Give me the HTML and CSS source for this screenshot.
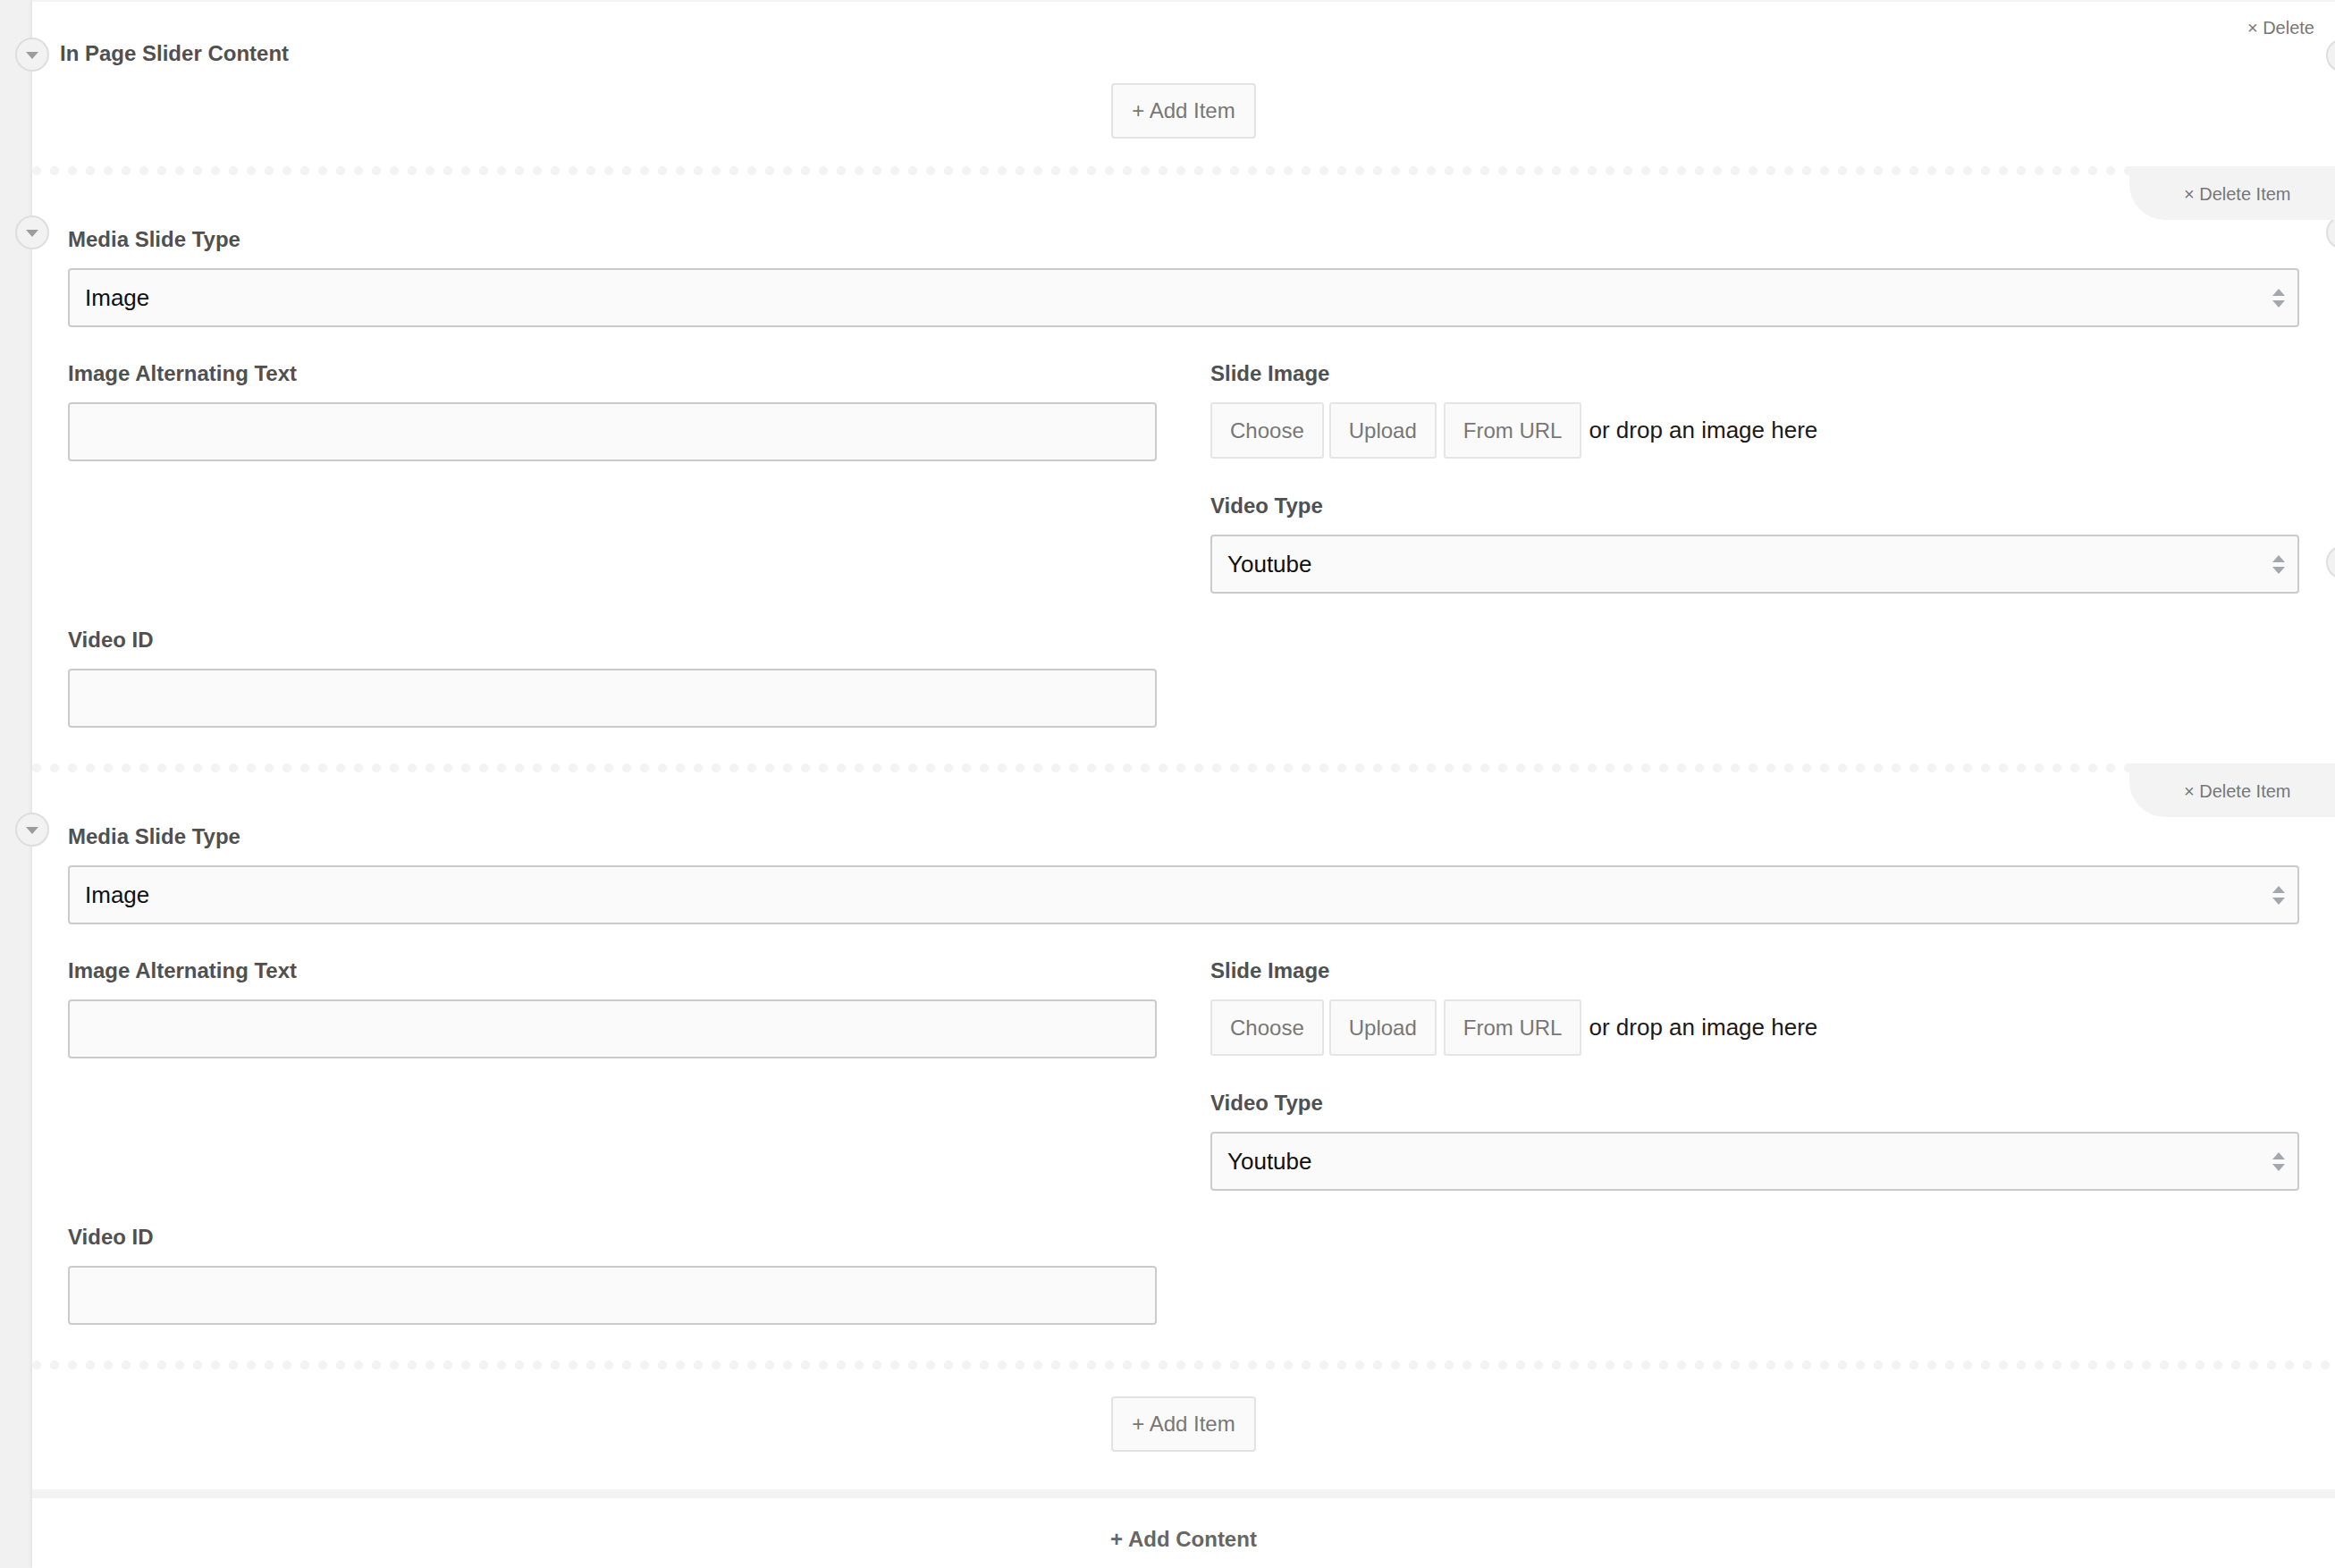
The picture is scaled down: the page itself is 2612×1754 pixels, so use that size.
FILE: index.html
```html
<!DOCTYPE html>
<html lang="en">
<head>
    <meta charset="UTF-8">
    <meta name="viewport" content="width=device-width, initial-scale=1.0">
    <title>In Page Slider Content</title>
    <link rel="stylesheet" href="styles.css">
</head>
<body>
    <div class="panel">
        <div class="content-block">
            <span class="toggle"></span>
            <span class="edge-toggle"></span>
            <a class="delete-block" href="#">&times; Delete</a>
            <h3 class="block-title">In Page Slider Content</h3>
            <div class="add-row">
                <button class="add-item" type="button">+ Add Item</button>
            </div>
        </div>

        <div class="item dotted">
            <span class="toggle"></span>
            <span class="edge-toggle"></span>
            <span class="edge-toggle lower"></span>
            <a class="delete-item" href="#">&times; Delete Item</a>
            <div class="fields">
                <div class="field wide">
                    <label>Media Slide Type</label>
                    <div class="select">
                        <span>Image</span>
                        <svg class="arrows" width="14" height="21" viewBox="0 0 14 21"><path d="M0 8 L7 0 L14 8 Z M0 13 L14 13 L7 21 Z"/></svg>
                    </div>
                </div>
                <div class="field">
                    <label>Image Alternating Text</label>
                    <input class="text-input" type="text">
                </div>
                <div class="stack">
                    <div class="field">
                        <label>Slide Image</label>
                        <div class="upload-row">
                            <button class="upload-btn" type="button">Choose</button>
                            <button class="upload-btn" type="button">Upload</button>
                            <button class="upload-btn" type="button">From URL</button>
                            <span class="drop-text">or drop an image here</span>
                        </div>
                    </div>
                    <div class="field">
                        <label>Video Type</label>
                        <div class="select">
                            <span>Youtube</span>
                            <svg class="arrows" width="14" height="21" viewBox="0 0 14 21"><path d="M0 8 L7 0 L14 8 Z M0 13 L14 13 L7 21 Z"/></svg>
                        </div>
                    </div>
                </div>
                <div class="field">
                    <label>Video ID</label>
                    <input class="text-input" type="text">
                </div>
            </div>
        </div>

        <div class="item dotted">
            <span class="toggle"></span>
            <a class="delete-item" href="#">&times; Delete Item</a>
            <div class="fields">
                <div class="field wide">
                    <label>Media Slide Type</label>
                    <div class="select">
                        <span>Image</span>
                        <svg class="arrows" width="14" height="21" viewBox="0 0 14 21"><path d="M0 8 L7 0 L14 8 Z M0 13 L14 13 L7 21 Z"/></svg>
                    </div>
                </div>
                <div class="field">
                    <label>Image Alternating Text</label>
                    <input class="text-input" type="text">
                </div>
                <div class="stack">
                    <div class="field">
                        <label>Slide Image</label>
                        <div class="upload-row">
                            <button class="upload-btn" type="button">Choose</button>
                            <button class="upload-btn" type="button">Upload</button>
                            <button class="upload-btn" type="button">From URL</button>
                            <span class="drop-text">or drop an image here</span>
                        </div>
                    </div>
                    <div class="field">
                        <label>Video Type</label>
                        <div class="select">
                            <span>Youtube</span>
                            <svg class="arrows" width="14" height="21" viewBox="0 0 14 21"><path d="M0 8 L7 0 L14 8 Z M0 13 L14 13 L7 21 Z"/></svg>
                        </div>
                    </div>
                </div>
                <div class="field">
                    <label>Video ID</label>
                    <input class="text-input" type="text">
                </div>
            </div>
        </div>

        <div class="add-row bottom dotted">
            <button class="add-item" type="button">+ Add Item</button>
        </div>

        <div class="band"></div>

        <div class="add-content">+ Add Content</div>
    </div>
</body>
</html>
```

FILE: styles.css
```css
html, body {
    overflow: hidden;
}

body {
    margin: 0;
    padding: 0;
    background-color: #f1f1f1;
    font-family: "Liberation Sans", Arial, sans-serif;
    color: #505050;
    height: 1754px;
}

.panel {
    margin-left: 36px;
    background-color: #fff;
    border-top: 2px solid #f4f4f4;
    box-shadow: -2px 0 3px rgba(0, 0, 0, 0.05);
    height: 1752px;
}

/* round collapse buttons on the left edge */
.toggle {
    position: absolute;
    left: -19px;
    width: 38px;
    height: 38px;
    box-sizing: border-box;
    border: 2px solid #dedede;
    border-radius: 50%;
    background-color: #f2f2f2;
    display: flex;
    align-items: center;
    justify-content: center;
}

.toggle::after {
    content: "";
    border-left: 7px solid transparent;
    border-right: 7px solid transparent;
    border-top: 8px solid #9c9c9c;
    margin-top: 1px;
}

.edge-toggle {
    position: absolute;
    right: -28px;
    width: 38px;
    height: 38px;
    box-sizing: border-box;
    border: 2px solid #dedede;
    border-radius: 50%;
    background-color: #f2f2f2;
}

.content-block {
    position: relative;
    padding: 43px 0 31px;
}

.content-block .toggle {
    top: 40px;
}

.content-block .edge-toggle {
    top: 41px;
}

.block-title {
    margin: 0 0 18px 31px;
    font-size: 24px;
    line-height: 30px;
    font-weight: bold;
    color: #505050;
}

.delete-block {
    position: absolute;
    top: 17px;
    right: 23px;
    font-size: 20px;
    line-height: 24px;
    color: #777;
    text-decoration: none;
}

.add-row {
    display: flex;
    justify-content: center;
}

.add-item {
    height: 62px;
    padding: 0 21px;
    border: 2px solid #e3e3e3;
    border-radius: 4px;
    background-color: #fafafa;
    font-family: "Liberation Sans", Arial, sans-serif;
    font-size: 24px;
    color: #777;
    cursor: pointer;
}

/* dotted separator along the top of a row */
.dotted {
    background-image: radial-gradient(circle, #f3f3f3 4.5px, transparent 5.5px);
    background-size: 20px 10px;
    background-position: -5px 0;
    background-repeat: repeat-x;
}

.item {
    position: relative;
    padding: 67px 40px 40px;
}

.item .toggle {
    top: 55px;
}

.item .edge-toggle {
    top: 55px;
}

.item .edge-toggle.lower {
    top: 424px;
}

.delete-item {
    position: absolute;
    top: 0;
    right: 0;
    width: 230px;
    height: 60px;
    box-sizing: border-box;
    padding-left: 61px;
    line-height: 62px;
    font-size: 20px;
    color: #777;
    text-decoration: none;
    background-color: #f3f3f3;
    border-bottom-left-radius: 40px;
}

.fields {
    display: grid;
    grid-template-columns: 1fr 1fr;
    column-gap: 60px;
    row-gap: 37px;
    align-items: start;
}

.field.wide {
    grid-column: 1 / 3;
}

.stack {
    display: flex;
    flex-direction: column;
    gap: 38px;
}

.field label {
    display: block;
    margin-bottom: 17px;
    font-size: 24px;
    line-height: 30px;
    font-weight: bold;
    color: #505050;
}

.select {
    display: flex;
    align-items: center;
    justify-content: space-between;
    height: 66px;
    box-sizing: border-box;
    padding: 0 14px 0 17px;
    border: 2px solid #cbcbcb;
    border-radius: 4px;
    background-color: #fafafa;
    font-size: 26px;
    color: #111;
}

.arrows {
    fill: #a4a8ae;
}

.text-input {
    display: block;
    width: 100%;
    height: 66px;
    box-sizing: border-box;
    border: 2px solid #cbcbcb;
    border-radius: 4px;
    background-color: #fafafa;
    font-size: 26px;
}

.upload-row {
    display: flex;
    align-items: center;
    gap: 6px;
    height: 63px;
}

.upload-btn {
    height: 63px;
    padding: 0 20px;
    border: 2px solid #e5e5e5;
    border-radius: 3px;
    background-color: #fafafa;
    font-family: "Liberation Sans", Arial, sans-serif;
    font-size: 24px;
    color: #777;
    cursor: pointer;
}

.upload-btn:nth-child(3) {
    margin-left: 2px;
}

.drop-text {
    margin-left: 2px;
    font-size: 26px;
    color: #1a1a1a;
}

.add-row.bottom {
    padding: 40px 0 42px;
}

.band {
    height: 10px;
    background-color: #f3f3f3;
}

.add-content {
    padding-top: 31px;
    text-align: center;
    font-size: 24px;
    line-height: 30px;
    font-weight: bold;
    color: #666;
}
```
